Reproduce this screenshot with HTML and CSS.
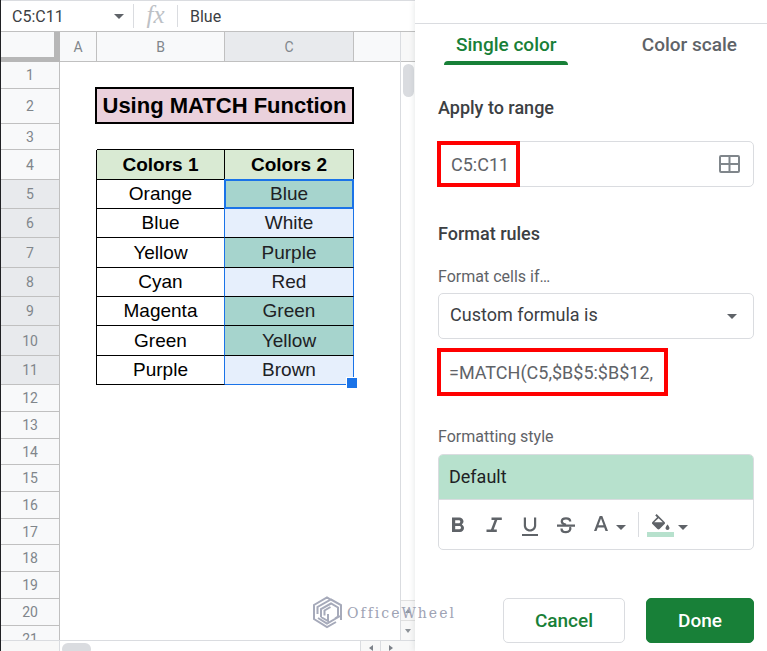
FILE: index.html
```html
<!DOCTYPE html>
<html lang="en">
<head>
    <meta charset="UTF-8">
    <meta name="viewport" content="width=device-width, initial-scale=1.0">
    <title>Conditional format rules</title>
    <link rel="stylesheet" href="styles.css">
</head>
<body>
    <div class="app">
        <main class="sheet">
            <div class="formula-bar">
                <button class="name-box" type="button">
                    <span>C5:C11</span>
                    <svg width="10" height="5" viewBox="0 0 10 5"><path d="M0 0h10L5 5z" fill="#5f6368"/></svg>
                </button>
                <span class="fx">fx</span>
                <input class="cell-input" type="text" value="Blue" aria-label="Cell content">
            </div>

            <div class="grid-area">
                <table class="grid">
                    <colgroup>
                        <col class="col-head">
                        <col class="col-a">
                        <col class="col-b">
                        <col class="col-c">
                        <col>
                    </colgroup>
                    <thead>
                        <tr>
                            <th class="corner"></th>
                            <th>A</th>
                            <th>B</th>
                            <th class="active">C</th>
                            <th class="last"></th>
                        </tr>
                    </thead>
                    <tbody>
                        <tr class="h27"><th>1</th><td></td><td></td><td></td><td></td></tr>
                        <tr class="h35"><th>2</th><td></td><td colspan="2" class="title">Using MATCH Function</td><td></td></tr>
                        <tr class="h26"><th>3</th><td></td><td class="line-bottom"></td><td class="line-bottom"></td><td></td></tr>
                        <tr class="h30 data"><th>4</th><td class="edge"></td><td class="cell label">Colors 1</td><td class="cell label">Colors 2</td><td></td></tr>
                        <tr class="h29 data picked"><th>5</th><td class="edge"></td><td class="cell">Orange</td><td class="cell match current">Blue</td><td></td></tr>
                        <tr class="h29 data picked"><th>6</th><td class="edge"></td><td class="cell">Blue</td><td class="cell">White</td><td></td></tr>
                        <tr class="h30 data picked"><th>7</th><td class="edge"></td><td class="cell">Yellow</td><td class="cell match">Purple</td><td></td></tr>
                        <tr class="h29 data picked"><th>8</th><td class="edge"></td><td class="cell">Cyan</td><td class="cell">Red</td><td></td></tr>
                        <tr class="h29 data picked"><th>9</th><td class="edge"></td><td class="cell">Magenta</td><td class="cell match">Green</td><td></td></tr>
                        <tr class="h30 data picked"><th>10</th><td class="edge"></td><td class="cell">Green</td><td class="cell match">Yellow</td><td></td></tr>
                        <tr class="h29 data picked"><th>11</th><td class="edge"></td><td class="cell">Purple</td><td class="cell range-end">Brown</td><td></td></tr>
                        <tr class="h27"><th>12</th><td></td><td></td><td></td><td></td></tr>
                        <tr class="h27"><th>13</th><td></td><td></td><td></td><td></td></tr>
                        <tr class="h26"><th>14</th><td></td><td></td><td></td><td></td></tr>
                        <tr class="h27"><th>15</th><td></td><td></td><td></td><td></td></tr>
                        <tr class="h27"><th>16</th><td></td><td></td><td></td><td></td></tr>
                        <tr class="h26"><th>17</th><td></td><td></td><td></td><td></td></tr>
                        <tr class="h27"><th>18</th><td></td><td></td><td></td><td></td></tr>
                        <tr class="h27"><th>19</th><td></td><td></td><td></td><td></td></tr>
                        <tr class="h27"><th>20</th><td></td><td></td><td></td><td></td></tr>
                        <tr class="h27"><th>21</th><td></td><td></td><td></td><td></td></tr>
                    </tbody>
                </table>
                <div class="scroll-y">
                    <div class="scroll-top"></div>
                    <div class="thumb-y"></div>
                    <div class="arrows-y">
                        <span><svg width="6" height="4" viewBox="0 0 6 4"><path d="M3 0l3 4H0z" fill="#8d9298"/></svg></span>
                        <span><svg width="6" height="4" viewBox="0 0 6 4"><path d="M0 0h6L3 4z" fill="#8d9298"/></svg></span>
                    </div>
                </div>
            </div>

            <div class="scroll-x">
                <div class="scroll-corner"></div>
                <div class="thumb-x"></div>
                <div class="arrows-x">
                    <span><svg width="4" height="6" viewBox="0 0 4 6"><path d="M4 0v6L0 3z" fill="#7d828a"/></svg></span>
                    <span><svg width="4" height="6" viewBox="0 0 4 6"><path d="M0 0v6l4-3z" fill="#7d828a"/></svg></span>
                </div>
            </div>
        </main>

        <aside class="panel">
            <div class="panel-top"></div>
            <div class="tabs" role="tablist">
                <button class="tab selected" type="button" role="tab" aria-selected="true">Single color</button>
                <button class="tab" type="button" role="tab" aria-selected="false">Color scale</button>
            </div>

            <form class="rules">
                <label class="heading" for="range">Apply to range</label>
                <div class="field range-field">
                    <input id="range" type="text" value="C5:C11">
                    <svg width="22" height="18" viewBox="0 0 22 18" fill="none" stroke="#80868b" stroke-width="2"><rect x="1" y="1" width="19" height="16" rx="1"/><path d="M10.5 1v16M1 9h19"/></svg>
                    <span class="mark mark-range"></span>
                </div>

                <h2 class="heading">Format rules</h2>
                <label class="caption" for="condition">Format cells if…</label>
                <div class="field">
                    <select id="condition">
                        <option>Custom formula is</option>
                    </select>
                    <svg class="caret" width="10" height="5" viewBox="0 0 10 5"><path d="M0 0h10L5 5z" fill="#5f6368"/></svg>
                </div>
                <div class="formula">
                    <input type="text" value="=MATCH(C5,$B$5:$B$12," aria-label="Formula">
                    <span class="mark"></span>
                </div>

                <h3 class="caption">Formatting style</h3>
                <div class="style-box">
                    <div class="preview">Default</div>
                    <div class="toolbar">
                        <button type="button" aria-label="Bold"><svg width="24" height="24" viewBox="0 0 24 24"><path d="M15.8 11.500c1-.700 1.700-1.800 1.700-2.900C17.500 6.200 15.700 4.500 13.300 4.500H6V19h8c2.300 0 4-1.700 4-4 0-1.500-.900-2.800-2.200-3.500zM9.200 7.200h3.600c.900 0 1.500.600 1.500 1.500s-.600 1.500-1.500 1.500H9.200zm4.200 9H9.200v-3.300h4.200c.900 0 1.600.700 1.600 1.600s-.700 1.700-1.600 1.700z"/></svg></button>
                        <button type="button" aria-label="Italic"><svg width="24" height="24" viewBox="0 0 24 24"><path d="M9.500 4.500v2.500h3.100L9 16.500H4.500V19h10.300v-2.500h-3.100L15.300 7h4.500V4.500z"/></svg></button>
                        <button type="button" aria-label="Underline"><svg width="24" height="24" viewBox="0 0 24 24"><path d="M12 18.500c3.600 0 6.200-2.600 6.200-6V4.500H16v8c0 2.200-1.700 3.900-4 3.900s-4-1.700-4-3.900v-8H5.800v8c0 3.400 2.600 6 6.200 6zM4 21v2h16v-2H4z"/></svg></button>
                        <button type="button" aria-label="Strikethrough"><svg width="24" height="24" viewBox="0 0 24 24"><path d="M3 11.500h18v2.200H3z"/><path d="M16.200 8.600C16.200 6.500 14.500 5.300 12 5.300S7.800 6.500 7.800 8.400c0 1.800 1.600 2.700 4.200 3.400M16 14c1.200 2.800-.8 5.200-4 5.200-2.800 0-4.500-1.400-4.500-3.700" fill="none" stroke="#5f6368" stroke-width="2.300"/></svg></button>
                        <button type="button" class="with-caret" aria-label="Text color">
                            <svg width="22" height="26" viewBox="0 0 22 26"><path d="M9.700 4L4 19h2.500l1.300-3.600h6.400l1.300 3.600H18L12.300 4H9.700zm-1.200 9.300L11 6.400l2.500 6.900h-5z"/></svg>
                            <svg width="10" height="5" viewBox="0 0 10 5"><path d="M0 0h10L5 5z"/></svg>
                        </button>
                        <span class="separator"></span>
                        <button type="button" class="with-caret" aria-label="Fill color">
                            <span class="fill-icon"><svg width="22" height="20" viewBox="2 -1 22 20"><path d="M16.560 8.940L8.620 1 7.210 2.410l1.880 1.880-4.650 4.650c-.590.590-.590 1.540 0 2.120l5 5c.290.290.680.440 1.060.440s.770-.150 1.060-.440l5-5c.590-.580.590-1.530 0-2.120zM6.200 9.300L10.500 5.300l4.300 4zM19.500 11.500s-2 2.170-2 3.500c0 1.100.900 2 2 2s2-.900 2-2c0-1.330-2-3.500-2-3.500z"/></svg></span>
                            <svg width="10" height="5" viewBox="0 0 10 5"><path d="M0 0h10L5 5z"/></svg>
                        </button>
                    </div>
                </div>

                <div class="actions">
                    <button class="btn" type="button">Cancel</button>
                    <button class="btn primary" type="button">Done</button>
                </div>
            </form>
        </aside>

        <div class="watermark">
            <svg width="32" height="34" viewBox="0 0 32 34" fill="none" stroke="#a6aaba" stroke-width="2">
                <path d="M2 20V9L15 1.500l4 2.300M5.500 18v-7L19 3.500l10 5.500v15M9 21v-8l10-5.500 7 4v9l-3 2M12.500 19.500v-5l6-3.500M9 21l7 4v-7M2 20v3l13 8 9-5M6 22l9 5.500 14-8"/>
            </svg>
            <span>OfficeWheel</span>
        </div>
    </div>
</body>
</html>
```

FILE: styles.css
```css
* {
    box-sizing: border-box;
}
body {
    margin: 0;
    font-family: Roboto, "Liberation Sans", sans-serif;
    color: #3c4043;
    background-color: #fff;
}
button, input, select {
    font-family: inherit;
    font-size: inherit;
    color: inherit;
    background: none;
    border: none;
    margin: 0;
    padding: 0;
    outline: none;
}
button {
    cursor: pointer;
}
.app {
    position: relative;
    display: flex;
    height: 100vh;
    overflow: hidden;
}

/* Spreadsheet */
.sheet {
    flex: 6;
    display: flex;
    flex-direction: column;
    min-width: 0;
    border-left: 1px solid #202124;
}
.formula-bar {
    display: flex;
    align-items: center;
    height: 32px;
    border-top: 1px solid #dadce0;
    border-bottom: 1px solid #c0c0c0;
    font-size: 16px;
}
.name-box {
    display: flex;
    align-items: center;
    justify-content: space-between;
    width: 133px;
    height: 24px;
    padding: 0 9px 0 11px;
    border-right: 1px solid #dadce0;
}
.fx {
    width: 44px;
    height: 22px;
    line-height: 20px;
    text-align: center;
    border-right: 1px solid #dadce0;
    font-family: "Liberation Serif", serif;
    font-style: italic;
    font-size: 25px;
    color: #bdc1c6;
}
.cell-input {
    flex: 1;
    min-width: 0;
    padding-left: 12px;
}
.grid-area {
    flex: 1;
    display: flex;
    min-height: 0;
    overflow: hidden;
}
.grid {
    flex: 1;
    align-self: flex-start;
    table-layout: fixed;
    border-collapse: separate;
    border-spacing: 0;
}
.col-head {
    width: 59px;
}
.col-a {
    width: 37px;
}
.col-b {
    width: 128px;
}
.col-c {
    width: 129px;
}
.grid th, .grid td {
    padding: 0;
    line-height: 20px;
}
.grid th {
    font-size: 14px;
    font-weight: normal;
    color: #80868b;
    background-color: #f8f9fa;
    border-right: 1px solid #c0c0c0;
    border-bottom: 1px solid #c0c0c0;
}
.grid thead th {
    height: 30px;
}
.grid thead .corner {
    border-right: 6px solid #b7b7b7;
    border-bottom: 5px solid #b7b7b7;
}
.grid thead .active, .picked th {
    background-color: #e8eaed;
}
.grid thead .last {
    border-right: none;
}
.h26 {
    height: 26px;
}
.h27 {
    height: 27px;
}
.h29 {
    height: 29px;
}
.h30 {
    height: 30px;
}
.h35 {
    height: 35px;
}
.grid .title {
    position: relative;
    font-family: "Liberation Sans", Arial, sans-serif;
    font-size: 22px;
    font-weight: bold;
    text-align: center;
    color: #000;
    background-color: #ead1dc;
    border-right: 2px solid #000;
    border-bottom: 2px solid #000;
    box-shadow: -2px -2px #000, 0 -2px #000, -2px 0 #000;
}
.grid .line-bottom {
    border-bottom: 1px solid #000;
}
.grid .edge {
    border-right: 1px solid #000;
}
.grid .cell {
    position: relative;
    font-family: "Liberation Sans", Arial, sans-serif;
    font-size: 19px;
    text-align: center;
    color: #000;
    border-right: 1px solid #000;
    border-bottom: 1px solid #000;
}
.grid .label {
    font-weight: bold;
    background-color: #d9ead3;
}
.picked .cell {
    border-right-color: #1a73e8;
}
.picked .cell + .cell {
    background-color: #e6effc;
    color: #202124;
}
.picked .cell + .match {
    background-color: #a6d4cd;
}
.current::after {
    content: "";
    position: absolute;
    z-index: 1;
    inset: -1px;
    border: 2px solid #1a73e8;
}
.grid .range-end {
    border-bottom-color: #1a73e8;
}
.range-end::after {
    content: "";
    position: absolute;
    right: -5px;
    bottom: -5px;
    width: 10px;
    height: 10px;
    background-color: #1a73e8;
    border: 1px solid #fff;
}

/* Scrollbars */
.scroll-y {
    display: flex;
    flex-direction: column;
    width: 15px;
    border-left: 1px solid #dadce0;
}
.scroll-top {
    height: 30px;
    background-color: #f8f8f8;
    border-bottom: 1px solid #c0c0c0;
}
.thumb-y {
    width: 11px;
    height: 33px;
    margin: 2px;
    border-radius: 6px;
    background-color: #dadce0;
}
.arrows-y {
    margin-top: auto;
    background-color: #f8f8f8;
}
.arrows-y span {
    display: flex;
    align-items: center;
    justify-content: center;
    height: 20px;
    border-top: 1px solid #e0e0e0;
}
.scroll-x {
    display: flex;
    height: 11px;
    border-top: 1px solid #dadce0;
}
.scroll-corner {
    width: 59px;
    background-color: #f8f8f8;
    border-right: 1px solid #dadce0;
}
.thumb-x {
    width: 29px;
    height: 12px;
    margin: 2px;
    border-radius: 6px;
    background-color: #dadce0;
}
.arrows-x {
    display: flex;
    margin-left: auto;
    padding-right: 15px;
    background-color: #f8f8f8;
}
.arrows-x span {
    display: flex;
    justify-content: center;
    width: 20px;
    padding-top: 4px;
    border-left: 1px solid #dadce0;
}

/* Side panel */
.panel {
    position: relative;
    flex: 0 0 352px;
    min-width: 0;
    display: flex;
    flex-direction: column;
    background-color: #fff;
    box-shadow: 0 0 6px rgba(60, 64, 67, 0.15);
    font-size: 18px;
}
.panel-top {
    height: 24px;
    border-bottom: 1px solid #dadce0;
}
.tabs {
    display: flex;
    justify-content: space-between;
    padding: 0 18px 0 29px;
}
.tab {
    position: relative;
    height: 41px;
    padding: 0 12px;
    font-size: 19px;
    font-weight: 500;
    color: #5f6368;
}
.tab.selected {
    color: #188038;
}
.tab.selected::after {
    content: "";
    position: absolute;
    left: 0;
    right: 0;
    bottom: 0;
    height: 4px;
    border-radius: 4px 4px 0 0;
    background-color: #188038;
}
.rules {
    flex: 1;
    display: flex;
    flex-direction: column;
    padding: 31px 13px 8px 23px;
}
.heading {
    margin: 0;
    font-size: 18px;
    line-height: 24px;
    font-weight: 500;
}
.caption {
    margin: 0;
    font-size: 16px;
    line-height: 20px;
    font-weight: normal;
    color: #5f6368;
}
.field {
    position: relative;
    display: flex;
    align-items: center;
    height: 46px;
    border: 1px solid #dadce0;
    border-radius: 5px;
}
.field input, .field select {
    flex: 1;
    align-self: stretch;
    min-width: 0;
    padding: 0 12px;
    appearance: none;
}
.field select {
    padding: 0 11px 4px;
}
.range-field {
    margin: 21px 0 35px;
    padding-right: 12px;
    color: #5f6368;
}
.heading + .caption {
    margin: 21px 0 6px;
}
.caret {
    position: absolute;
    right: 16px;
    pointer-events: none;
}
.formula {
    position: relative;
    display: flex;
    align-self: flex-start;
    width: 230px;
    height: 48px;
    margin: 9px 0 31px;
    color: #5f6368;
}
.formula input {
    flex: 1;
    min-width: 0;
    padding: 0 0 0 11px;
}
.mark {
    position: absolute;
    inset: 0 0 0 -1px;
    border: 4px solid #f00;
    pointer-events: none;
}
.mark-range {
    inset: -1px auto -1px -2px;
    width: 83px;
}
.style-box {
    margin-top: 7px;
    border: 1px solid #dadce0;
    border-radius: 5px;
    overflow: hidden;
}
.preview {
    padding: 0 10px;
    line-height: 44px;
    color: #202124;
    background-color: #b7e1cd;
    border-bottom: 1px solid #dadce0;
}
.toolbar {
    display: flex;
    align-items: center;
    gap: 12px;
    height: 49px;
    padding: 0 7px;
}
.toolbar button {
    display: flex;
    align-items: center;
}
.toolbar svg {
    fill: #5f6368;
}
.toolbar .with-caret {
    gap: 4px;
}
.with-caret > svg:last-child {
    margin-top: 6px;
}
.separator {
    height: 25px;
    margin-right: -4px;
    border-left: 1px solid #dadce0;
}
.fill-icon {
    display: flex;
    justify-content: center;
    width: 27px;
    border-bottom: 5px solid #b7e1cd;
}
.actions {
    display: flex;
    justify-content: flex-end;
    gap: 21px;
    margin-top: auto;
}
.btn {
    height: 45px;
    padding: 0 31px;
    font-size: 19px;
    font-weight: 500;
    color: #188038;
    border: 1px solid #dadce0;
    border-radius: 5px;
}
.btn.primary {
    color: #fff;
    background-color: #188038;
    border-color: #188038;
}

/* Brand mark over the page corner */
.watermark {
    position: absolute;
    left: 312px;
    bottom: 21px;
    display: flex;
    align-items: center;
    gap: 3px;
    font-family: "DejaVu Serif", serif;
    font-size: 14px;
    letter-spacing: 2px;
    color: #9ea3b4;
}
```
